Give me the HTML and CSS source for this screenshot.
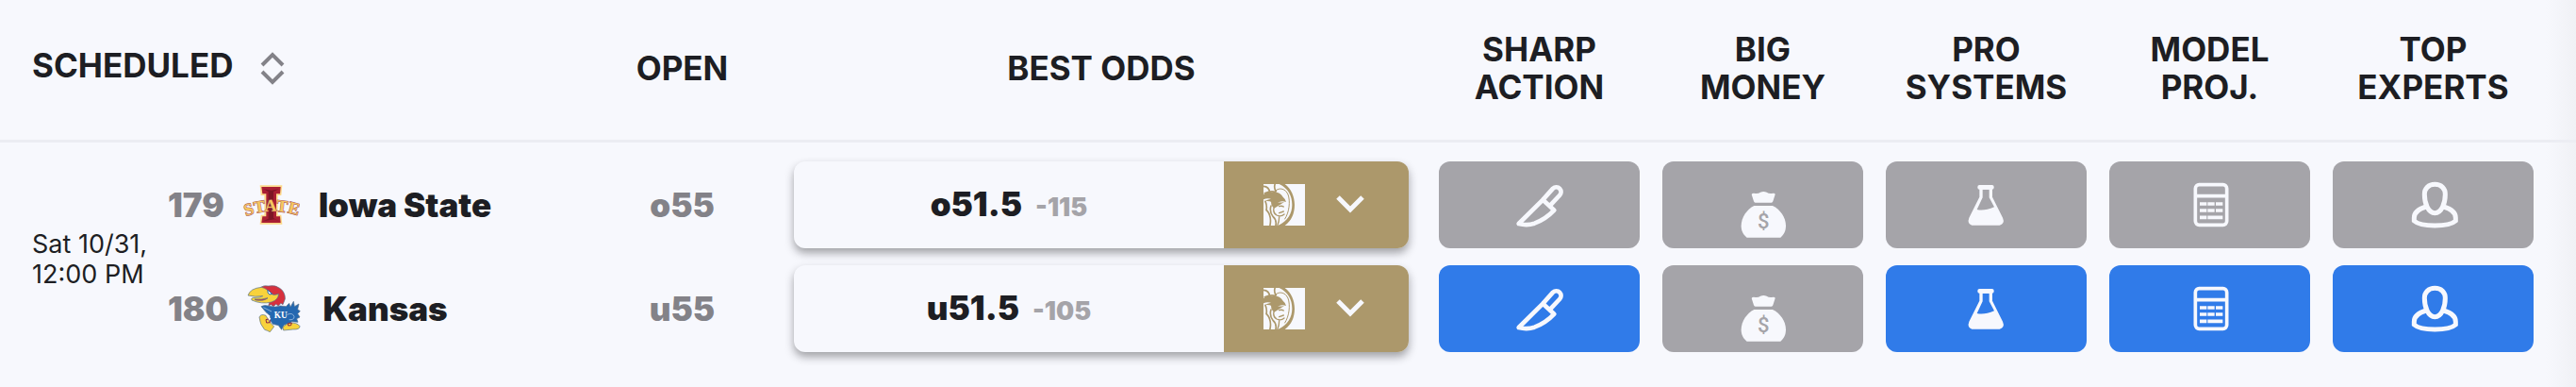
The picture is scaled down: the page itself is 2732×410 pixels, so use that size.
FILE: index.html
```html
<!DOCTYPE html>
<html lang="en">
<head>
<meta charset="utf-8">
<meta name="viewport" content="width=device-width, initial-scale=1">
<title>Best odds</title>
<link rel="stylesheet" href="styles.css">
</head>
<body>
<svg class="sprite" aria-hidden="true">
  <symbol id="knife" viewBox="37 63 180 216">
    <g fill="none" stroke="currentColor" stroke-width="14" stroke-linejoin="round">
      <path d="M137 155L60 231C72 234 95 235 110 230C135 221 155 207 173 188Z"/>
      <path d="M137 155L169 119A15 15 0 0 1 190 141L160 173"/>
    </g>
  </symbol>
  <symbol id="bag" viewBox="747 63 180 216">
    <path fill="currentColor" d="M800 138Q802 133 812 135Q822 136 828 131Q838 127 848 131Q854 136 864 135Q875 133 875 138L868 160Q867 164 863 164H812Q808 164 807 160Z"/>
    <path fill="currentColor" d="M808 174H867C890 185 909 210 909 238C909 255 902 267 892 275H785C774 267 767 255 767 238C767 210 786 185 808 174Z"/>
    <text class="bag-sign" x="838" y="247" text-anchor="middle">$</text>
  </symbol>
  <symbol id="flask" viewBox="289 63 180 216">
    <rect fill="currentColor" x="350" y="108" width="52" height="14" rx="6"/>
    <path fill="currentColor" fill-rule="evenodd" d="M356 116V146L323 212Q316 230 332 236H420Q438 230 430 212L397 146V116ZM366 122V148L348 186Q370 192 403 178L387 148V122Z"/>
  </symbol>
  <symbol id="calc" viewBox="281 63 180 216">
    <g fill="none" stroke="currentColor" stroke-width="11">
      <rect x="324" y="107" width="100" height="128" rx="12"/>
      <path d="M324 143H424M338 168H360M363 168H385M389 168H411M338 189H360M363 189H385M389 189H411M338 211H360M363 211H411"/>
    </g>
  </symbol>
  <symbol id="expert" viewBox="991 63 180 216">
    <g fill="none" stroke="currentColor" stroke-width="15">
      <path d="M1085 106C1106 106 1118 120 1118 137C1118 165 1107 197 1085 197C1063 197 1052 165 1052 137C1052 120 1064 106 1085 106Z"/>
      <path d="M1057 177C1030 185 1019 198 1019 212V222C1030 232 1055 237 1085 237C1115 237 1140 232 1151 222V212C1151 198 1140 185 1113 177"/>
    </g>
  </symbol>
  <symbol id="lion" viewBox="718 135 132 132">
    <path fill="currentColor" d="M718 135H850V267H718Z"/>
    <path fill="var(--tan)" d="M768 135H786C806 150 817 174 817 201C817 230 806 252 786 267H764C796 252 809 228 809 201C809 172 796 148 768 135Z"/>
    <g fill="none" stroke="var(--tan)" stroke-linecap="round">
      <path stroke-width="3" d="M758 155C770 145 788 150 796 168C804 190 800 225 786 246"/>
      <path stroke-width="5" d="M716 142Q736 142 738 162M755 133Q750 148 758 158M722 164Q740 156 756 160"/>
      <path stroke-width="5" d="M724 190Q730 204 727 218M728 218Q746 238 738 270M742 204Q736 222 748 238Q762 250 756 270"/>
      <path stroke-width="4" d="M752 208Q746 226 760 234Q774 240 784 231M768 227L782 222M768 206Q776 203 782 207M768 240Q768 254 762 268"/>
    </g>
    <path fill="var(--tan)" d="M718 168Q730 158 744 161Q770 158 780 176Q788 182 790 192Q778 188 768 192Q750 198 738 190Q728 188 722 190Q730 184 742 182Q730 178 718 184ZM742 190Q764 196 784 192Q766 204 752 212Q742 206 742 190Z"/>
  </symbol>
  <symbol id="chevron" viewBox="0 0 40 40">
    <path fill="none" stroke="currentColor" stroke-width="5" d="M7 12L20 25L33 12"/>
  </symbol>
  <symbol id="iowa-state" viewBox="60 37 180 150">
    <path fill="#fcd98a" d="M113 50H184L181 82H170V144H181L184 174H113L116 144H127V82H116Z"/>
    <path fill="#a91f33" d="M118 55H179L177 77H165V149H177L179 169H118L121 149H133V77H121Z"/>
    <path fill="#7d1626" d="M124 62L140 70V156L124 164L160 158L173 164L156 154V70L173 62L150 66Z"/>
    <path id="state-arc" fill="none" d="M58 152Q150 114 244 150"/>
    <text class="state-word" text-anchor="middle"><textPath href="#state-arc" startOffset="50%">STATE</textPath></text>
  </symbol>
  <symbol id="kansas" viewBox="72 366 180 150">
    <g stroke="#55708a" stroke-width="2" stroke-linejoin="round">
      <path fill="#d7303d" d="M116 373Q124 366 140 369Q162 364 178 377Q194 390 193 410L186 428L180 424L172 432L164 427L156 434L148 428L140 433L144 416Q170 412 172 396Q150 402 142 388Z"/>
      <path fill="#2468b0" d="M117 434Q128 428 142 433Q164 438 178 432L196 434L206 424L210 436L220 418L223 434L237 426L233 443L241 449L233 457L240 468L230 473L234 484L214 482L206 490L190 492L182 508L172 494L154 490L144 476L146 464L132 452Z"/>
      <path fill="#f8d23c" d="M75 399Q82 376 118 373Q138 378 144 392Q158 402 172 394Q173 412 150 420Q118 428 87 414Q83 406 96 406Q114 406 122 401Q98 405 75 399Z"/>
      <path fill="#d7303d" d="M96 411Q118 413 138 407Q126 418 100 414Z"/>
      <path fill="#f8d23c" d="M111 468Q116 456 132 463L144 484L158 498L145 515Q136 510 128 508Q112 490 111 468Z"/>
      <path fill="#f8d23c" d="M186 499L204 486Q232 484 240 497Q240 508 218 507L188 510Z"/>
    </g>
    <path fill="#fff" stroke="#2468b0" stroke-width="3" d="M138 382L152 394Q142 400 138 390Z"/>
    <path fill="none" stroke="#8e2340" stroke-width="3" d="M132 476L144 473L145 485L134 486ZM202 488L214 486L212 494L203 495Z"/>
    <path fill="none" stroke="#8ab0da" stroke-width="3" d="M124 437L150 450M200 460Q216 452 222 466Q222 478 206 476"/>
    <path fill="#fff" d="M134 456L148 474L142 478Z"/>
    <text class="ku-word" x="179" y="470" text-anchor="middle">KU</text>
  </symbol>
</svg>

<table class="odds-table">
  <colgroup>
    <col class="col-time">
    <col class="col-team">
    <col class="col-open">
    <col class="col-odds">
    <col class="col-signal" span="5">
    <col class="col-edge">
  </colgroup>
  <thead>
    <tr>
      <th class="head-scheduled" colspan="2" scope="col">
        <button class="sort" type="button">
          <span class="sort-label">SCHEDULED</span>
          <svg class="sort-icon" viewBox="0 0 28 36" aria-hidden="true"><path fill="none" stroke="currentColor" stroke-width="4" d="M3 15L14 4L25 15M3 22L14 33L25 22"/></svg>
        </button>
      </th>
      <th scope="col">OPEN</th>
      <th scope="col">BEST ODDS</th>
      <th scope="col">SHARP<br>ACTION</th>
      <th scope="col">BIG<br>MONEY</th>
      <th scope="col">PRO<br>SYSTEMS</th>
      <th scope="col">MODEL<br>PROJ.</th>
      <th scope="col">TOP<br>EXPERTS</th>
      <td></td>
    </tr>
  </thead>
  <tbody>
    <tr>
      <td class="time" rowspan="2">Sat 10/31,<br>12:00 PM</td>
      <td class="team-cell">
        <div class="team"><span class="rotation">179</span><svg class="team-logo" role="img" aria-label="Iowa State logo"><use href="#iowa-state"/></svg><span>Iowa State</span></div>
      </td>
      <td class="open">o55</td>
      <td class="odds-cell">
        <div class="odds">
          <div class="line"><span>o51.5</span><span class="price">-115</span></div>
          <button class="book" type="button" aria-label="BetMGM, more books"><svg class="book-logo"><use href="#lion"/></svg><svg class="chevron"><use href="#chevron"/></svg></button>
        </div>
      </td>
      <td><button class="signal" type="button" aria-label="Sharp action"><svg><use href="#knife"/></svg></button></td>
      <td><button class="signal" type="button" aria-label="Big money"><svg><use href="#bag"/></svg></button></td>
      <td><button class="signal" type="button" aria-label="Pro systems"><svg><use href="#flask"/></svg></button></td>
      <td><button class="signal" type="button" aria-label="Model projection"><svg><use href="#calc"/></svg></button></td>
      <td><button class="signal" type="button" aria-label="Top experts"><svg><use href="#expert"/></svg></button></td>
      <td></td>
    </tr>
    <tr>
      <td class="team-cell">
        <div class="team"><span class="rotation">180</span><svg class="team-logo" role="img" aria-label="Kansas logo"><use href="#kansas"/></svg><span>Kansas</span></div>
      </td>
      <td class="open">u55</td>
      <td class="odds-cell">
        <div class="odds">
          <div class="line"><span>u51.5</span><span class="price">-105</span></div>
          <button class="book" type="button" aria-label="BetMGM, more books"><svg class="book-logo"><use href="#lion"/></svg><svg class="chevron"><use href="#chevron"/></svg></button>
        </div>
      </td>
      <td><button class="signal active" type="button" aria-label="Sharp action"><svg><use href="#knife"/></svg></button></td>
      <td><button class="signal" type="button" aria-label="Big money"><svg><use href="#bag"/></svg></button></td>
      <td><button class="signal active" type="button" aria-label="Pro systems"><svg><use href="#flask"/></svg></button></td>
      <td><button class="signal active" type="button" aria-label="Model projection"><svg><use href="#calc"/></svg></button></td>
      <td><button class="signal active" type="button" aria-label="Top experts"><svg><use href="#expert"/></svg></button></td>
      <td></td>
    </tr>
  </tbody>
</table>
</body>
</html>
```

FILE: styles.css
```css
:root {
  --paper: #f7f8fd;
  --ink: #1d1e23;
  --muted: #838288;
  --light: #a5a4a9;
  --rule: #ecedf3;
  --blue: #307be9;
  --tan: #ac986b;
}

* {
  box-sizing: border-box;
}

body {
  margin: 0;
  min-height: 100vh;
  background: linear-gradient(to left, #f0f1f5, var(--paper) 32px);
  color: var(--ink);
  font-family: Inter, "Liberation Sans", sans-serif;
  font-size: 35px;
  line-height: 40px;
}

button {
  border: 0;
  padding: 0;
  background: none;
  color: inherit;
  font: inherit;
  cursor: pointer;
}

.sprite {
  display: none;
}

.odds-table {
  width: 100%;
  table-layout: fixed;
  border-collapse: separate;
  border-spacing: 0;
}

.col-time { width: 178px; }
.col-team { width: 447px; }
.col-open { width: 197px; }
.col-signal { width: 237px; }
.col-edge { width: 33px; }

thead th,
thead td {
  height: 151px;
  padding: 0 0 4px;
  border-bottom: 3px solid var(--rule);
  font-weight: 700;
  text-align: center;
  vertical-align: middle;
}

thead .head-scheduled {
  padding-left: 34px;
}

.sort {
  display: flex;
  align-items: center;
  gap: 28px;
}

.sort-label {
  padding-bottom: 6px;
}

.sort-icon {
  width: 28px;
  height: 36px;
  color: var(--muted);
}

tbody td {
  padding: 9px 12px;
}

tbody tr:first-child td {
  padding-top: 20px;
}

tbody tr:first-child .time {
  padding: 25px 0 9px 34px;
  font-size: 27px;
  line-height: 32px;
}

tbody .team-cell {
  padding-left: 0;
  padding-right: 0;
}

.team {
  display: flex;
  align-items: center;
  gap: 20px;
  font-weight: 900;
}

.rotation,
.open {
  color: var(--muted);
  font-weight: 900;
}

.open {
  text-align: center;
}

.team-logo {
  width: 60px;
  height: 50px;
}

.state-word {
  font: 700 54px "Liberation Serif", serif;
  fill: #f6c75e;
  stroke: #a4505a;
  stroke-width: 3px;
  paint-order: stroke;
}

.ku-word {
  font: 700 28px "Liberation Serif", serif;
  fill: #fff;
}

tbody .odds-cell {
  padding-left: 20px;
  padding-right: 20px;
}

.odds {
  display: flex;
  height: 92px;
  border-radius: 12px;
  background: var(--paper);
  box-shadow: 0 5px 10px rgba(29, 30, 35, 0.4);
}

.line {
  flex: 1;
  display: flex;
  align-items: baseline;
  justify-content: center;
  gap: 14px;
  padding-top: 25px;
  font-weight: 900;
}

.price {
  color: var(--light);
  font-size: 27px;
}

.book {
  display: flex;
  align-items: center;
  justify-content: center;
  gap: 28px;
  width: 196px;
  border-radius: 0 12px 12px 0;
  background: var(--tan);
  color: var(--paper);
}

.book-logo {
  width: 44px;
  height: 44px;
}

.chevron {
  width: 40px;
  height: 40px;
}

.signal {
  --tile: var(--light);
  display: flex;
  align-items: center;
  justify-content: center;
  width: 100%;
  height: 92px;
  border-radius: 12px;
  background: var(--tile);
  color: var(--paper);
}

.signal.active {
  --tile: var(--blue);
}

.signal svg {
  width: 60px;
  height: 72px;
}

.bag-sign {
  font: 500 66px Roboto, sans-serif;
  fill: var(--tile);
}
```
